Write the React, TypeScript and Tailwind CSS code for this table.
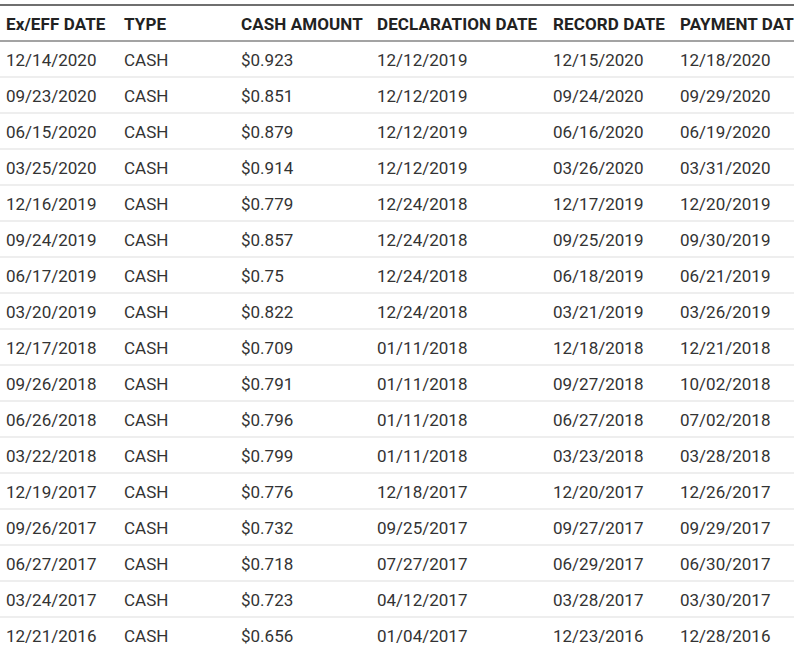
import React from "react";

const rows: string[][] = [
  ["12/14/2020", "CASH", "$0.923", "12/12/2019", "12/15/2020", "12/18/2020"],
  ["09/23/2020", "CASH", "$0.851", "12/12/2019", "09/24/2020", "09/29/2020"],
  ["06/15/2020", "CASH", "$0.879", "12/12/2019", "06/16/2020", "06/19/2020"],
  ["03/25/2020", "CASH", "$0.914", "12/12/2019", "03/26/2020", "03/31/2020"],
  ["12/16/2019", "CASH", "$0.779", "12/24/2018", "12/17/2019", "12/20/2019"],
  ["09/24/2019", "CASH", "$0.857", "12/24/2018", "09/25/2019", "09/30/2019"],
  ["06/17/2019", "CASH", "$0.75", "12/24/2018", "06/18/2019", "06/21/2019"],
  ["03/20/2019", "CASH", "$0.822", "12/24/2018", "03/21/2019", "03/26/2019"],
  ["12/17/2018", "CASH", "$0.709", "01/11/2018", "12/18/2018", "12/21/2018"],
  ["09/26/2018", "CASH", "$0.791", "01/11/2018", "09/27/2018", "10/02/2018"],
  ["06/26/2018", "CASH", "$0.796", "01/11/2018", "06/27/2018", "07/02/2018"],
  ["03/22/2018", "CASH", "$0.799", "01/11/2018", "03/23/2018", "03/28/2018"],
  ["12/19/2017", "CASH", "$0.776", "12/18/2017", "12/20/2017", "12/26/2017"],
  ["09/26/2017", "CASH", "$0.732", "09/25/2017", "09/27/2017", "09/29/2017"],
  ["06/27/2017", "CASH", "$0.718", "07/27/2017", "06/29/2017", "06/30/2017"],
  ["03/24/2017", "CASH", "$0.723", "04/12/2017", "03/28/2017", "03/30/2017"],
  ["12/21/2016", "CASH", "$0.656", "01/04/2017", "12/23/2016", "12/28/2016"],
];

const headers = ["Ex/EFF DATE", "TYPE", "CASH AMOUNT", "DECLARATION DATE", "RECORD DATE", "PAYMENT DATE"];

const grid = "grid grid-cols-[118px_117px_136px_176px_127px_140px]";

export default function App() {
  return (
    <div className="w-[794px] h-[647px] overflow-hidden bg-white pt-[4px]" style={{ fontFamily: "Roboto, 'Liberation Sans', sans-serif" }}>
      <div className="w-[814px]">
        <div className={`${grid} h-[38px] items-center border-t-2 border-b-2 border-t-[#6f6f6f] border-b-[#a3a3a3] text-[17px] font-bold text-[#222]`}>
          {headers.map((h) => (
            <div key={h} className="pl-[6px] pt-[4px] whitespace-nowrap tracking-[0.1px]">{h}</div>
          ))}
        </div>
        {rows.map((r, i) => (
          <div key={i} className={`${grid} h-[36px] items-center border-b-2 border-b-[#eeeeee] text-[17px] text-[#333]`}>
            {r.map((c, j) => (
              <div key={j} className="pl-[6px] pt-[4px] whitespace-nowrap">{c}</div>
            ))}
          </div>
        ))}
      </div>
    </div>
  );
}
